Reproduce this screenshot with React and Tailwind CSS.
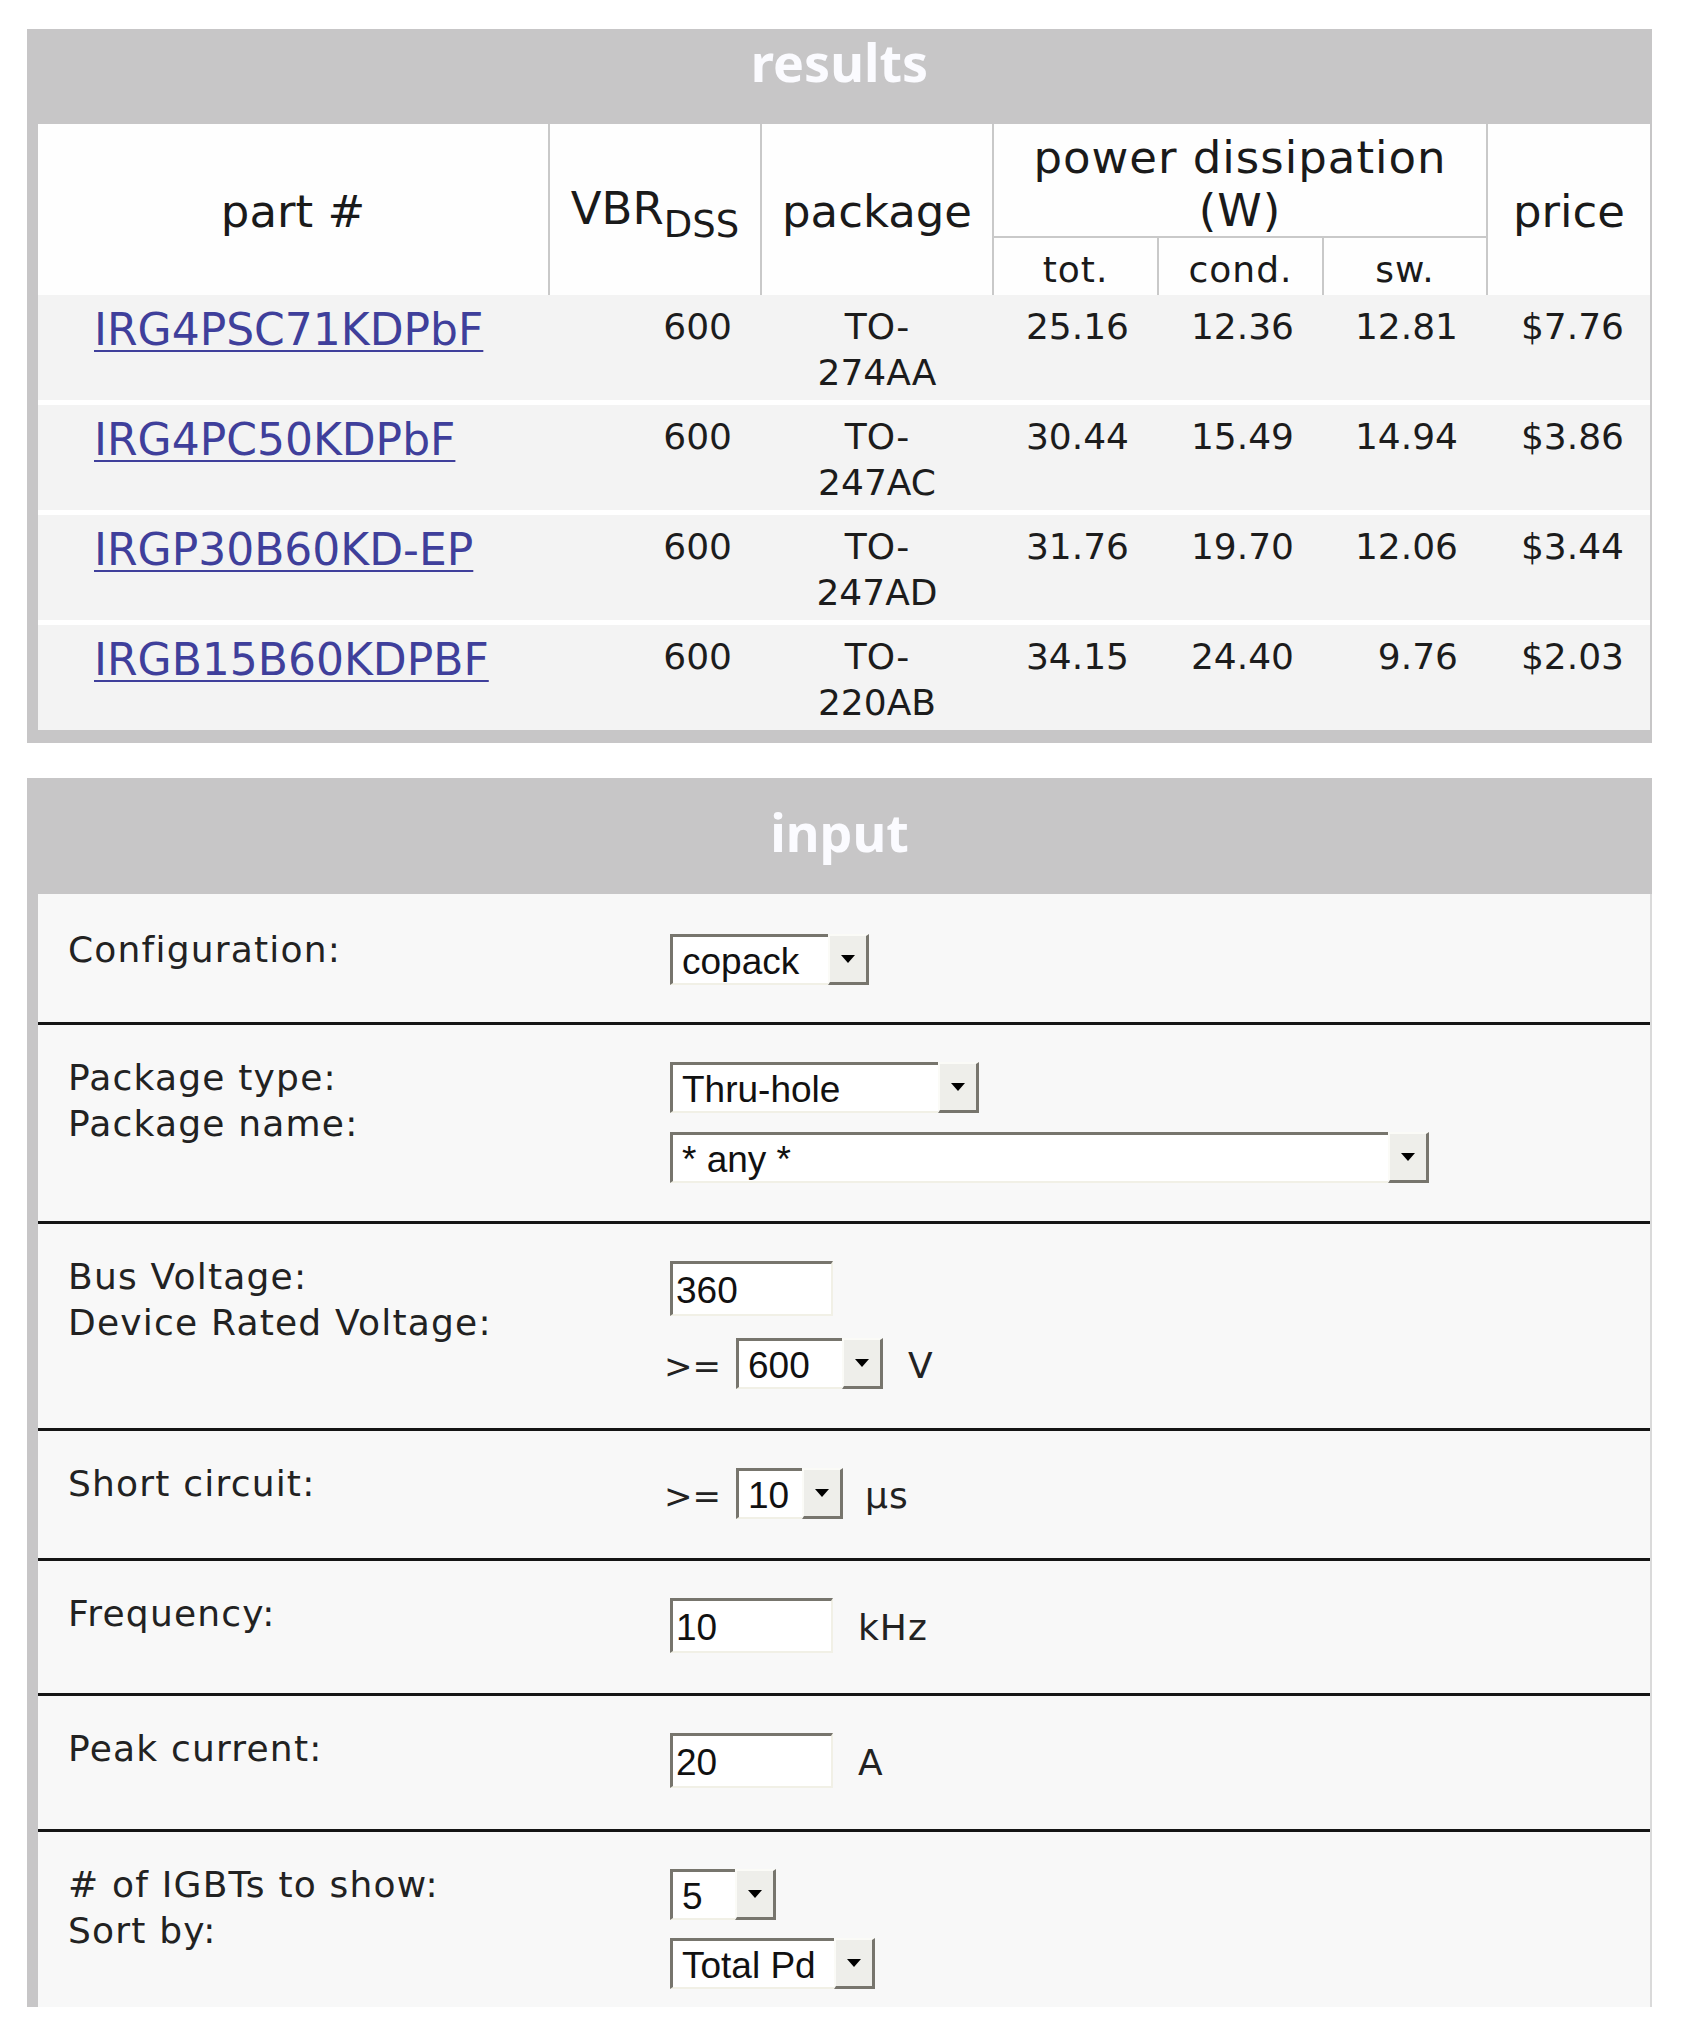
import React from "react";

const rows = [
  { part: "IRG4PSC71KDPbF", v: "600", pkg: ["TO-", "274AA"], tot: "25.16", cond: "12.36", sw: "12.81", price: "$7.76" },
  { part: "IRG4PC50KDPbF", v: "600", pkg: ["TO-", "247AC"], tot: "30.44", cond: "15.49", sw: "14.94", price: "$3.86" },
  { part: "IRGP30B60KD-EP", v: "600", pkg: ["TO-", "247AD"], tot: "31.76", cond: "19.70", sw: "12.06", price: "$3.44" },
  { part: "IRGB15B60KDPBF", v: "600", pkg: ["TO-", "220AB"], tot: "34.15", cond: "24.40", sw: "9.76", price: "$2.03" },
];

function Tri() {
  return (
    <svg width="14" height="8" viewBox="0 0 14 8">
      <polygon points="0,0 14,0 7,8" fill="#000" />
    </svg>
  );
}

function Select({ value, className }) {
  return (
    <div className={`flex h-[51px] shrink-0 ${className}`}>
      <div className="flex-1 bg-white border-t-[3px] border-l-[3px] border-b-2 border-t-[#77756d] border-l-[#77756d] border-b-[#f1f0e6] pl-[9px] pt-[4px] text-[37px] leading-[42px] text-[#111] font-['Liberation_Sans',Arial,sans-serif] whitespace-pre">
        {value}
      </div>
      <div className="w-[41px] flex items-center justify-center bg-[#eeeeea] border-t-2 border-l-2 border-t-[#fbfbf7] border-l-[#fbfbf7] border-r-[3px] border-b-[3px] border-r-[#77756d] border-b-[#77756d]">
        <Tri />
      </div>
    </div>
  );
}

function TextInput({ value }) {
  return (
    <div className="w-[163px] h-[55px] shrink-0 bg-white border-t-[3px] border-l-[3px] border-b-2 border-r-2 border-t-[#77756d] border-l-[#77756d] border-b-[#f1f0e6] border-r-[#f1f0e6] pl-[3px] pt-[6px] text-[37px] leading-[42px] text-[#111] font-['Liberation_Sans',Arial,sans-serif]">
      {value}
    </div>
  );
}

function Unit({ children, className }) {
  return (
    <span className={`leading-[46px] text-[#222] font-['DejaVu_Sans',sans-serif] ${className}`}>
      {children}
    </span>
  );
}

function InputRow({ labels, children, rowClass, stackClass }) {
  return (
    <div className={`flex border-t-[3px] ${rowClass}`}>
      <div className="w-[632px] shrink-0 pl-[30px] pt-[30px] text-[36px] leading-[46px] tracking-[1.2px] text-[#222]">
        {labels.map((l) => (
          <div key={l}>{l}</div>
        ))}
      </div>
      <div className={`flex flex-col pt-[37px] ${stackClass}`}>{children}</div>
    </div>
  );
}

export default function App() {
  return (
    <div className="min-h-[2024px] bg-white pt-[29px] pl-[27px] font-['DejaVu_Sans',sans-serif] text-[#1a1a1a]">
      <div className="w-[1625px]">
        {/* RESULTS */}
        <section className="bg-[#c7c6c7]">
          <div className="h-[95px] pt-[7px] text-center text-[52px] leading-[52px] font-bold text-[#fbfbff] font-['Noto_Sans',sans-serif]">
            results
          </div>
          <div className="pl-[11px] pr-[2px] pb-[13px]">
            <div className="grid grid-cols-[510px_210px_230px_163px_163px_162px_162px] grid-rows-[112px_57px] gap-[2px] bg-[#c9c9c9] text-[45px] leading-[52px]">
              <div className="row-span-2 bg-[#fefefe] flex items-center justify-center pt-[5px]">part #</div>
              <div className="row-span-2 bg-[#fefefe] flex items-center justify-center pb-[2px] whitespace-nowrap">
                <span>
                  VBR<sub className="text-[37px] bottom-[-13px]">DSS</sub>
                </span>
              </div>
              <div className="row-span-2 bg-[#fefefe] flex items-center justify-center pt-[5px]">package</div>
              <div className="col-span-3 bg-[#fefefe] pt-[7px] text-center leading-[53px] tracking-[1px]">
                <div>power dissipation</div>
                <div>(W)</div>
              </div>
              <div className="row-span-2 bg-[#fefefe] flex items-center justify-center pt-[5px]">price</div>
              <div className="bg-[#fefefe] flex items-center justify-center pt-[6px] text-[36px] leading-[46px] tracking-[1px]">tot.</div>
              <div className="bg-[#fefefe] flex items-center justify-center pt-[6px] text-[36px] leading-[46px] tracking-[1px]">cond.</div>
              <div className="bg-[#fefefe] flex items-center justify-center pt-[6px] text-[36px] leading-[46px] tracking-[1px]">sw.</div>
            </div>
            <div className="flex flex-col gap-[5px] bg-white">
              {rows.map((r) => (
                <div
                  key={r.part}
                  className="grid grid-cols-[510px_210px_230px_163px_163px_162px_162px] gap-x-[2px] h-[105px] bg-[#f3f3f3] text-[36px] leading-[46px] text-[#1c1c1c]"
                >
                  <div className="pl-[56px] pt-[12px] text-[44px] leading-[46px]">
                    <a href="#" className="text-[#3f3f9b] underline decoration-2 underline-offset-[5px]">
                      {r.part}
                    </a>
                  </div>
                  <div className="pt-[9px] pr-[28px] text-right">{r.v}</div>
                  <div className="pt-[9px] text-center">
                    <div>{r.pkg[0]}</div>
                    <div>{r.pkg[1]}</div>
                  </div>
                  <div className="pt-[9px] pr-[28px] text-right">{r.tot}</div>
                  <div className="pt-[9px] pr-[28px] text-right">{r.cond}</div>
                  <div className="pt-[9px] pr-[28px] text-right">{r.sw}</div>
                  <div className="pt-[9px] pr-[26px] text-right">{r.price}</div>
                </div>
              ))}
            </div>
          </div>
        </section>

        {/* INPUT */}
        <section className="mt-[35px]">
          <div className="h-[116px] bg-[#c7c6c7] pt-[28px] text-center text-[52px] leading-[52px] font-bold text-[#fbfbff] font-['Noto_Sans',sans-serif]">
            input
          </div>
          <div className="bg-[#f8f8f8] border-l-[11px] border-l-[#c7c6c7] border-r-2 border-r-[#dadada]">
            <InputRow labels={["Configuration:"]} rowClass="border-t-transparent" stackClass="pb-[37px]">
              <Select value="copack" className="w-[199px]" />
            </InputRow>
            <InputRow labels={["Package type:", "Package name:"]} rowClass="border-t-[#151515]" stackClass="pb-[38px] gap-[19px]">
              <Select value="Thru-hole" className="w-[309px]" />
              <Select value="* any *" className="w-[759px]" />
            </InputRow>
            <InputRow labels={["Bus Voltage:", "Device Rated Voltage:"]} rowClass="border-t-[#151515]" stackClass="pb-[39px] gap-[22px]">
              <TextInput value="360" />
              <div className="flex items-baseline">
                <Unit className="text-[34px] -ml-[6px]">&gt;=</Unit>
                <Select value="600" className="w-[147px] ml-[15px]" />
                <Unit className="text-[36px] ml-[25px]">V</Unit>
              </div>
            </InputRow>
            <InputRow labels={["Short circuit:"]} rowClass="border-t-[#151515]" stackClass="pb-[39px]">
              <div className="flex items-baseline">
                <Unit className="text-[34px] -ml-[6px]">&gt;=</Unit>
                <Select value="10" className="w-[107px] ml-[15px]" />
                <Unit className="text-[36px] ml-[22px] tracking-[1px]">µs</Unit>
              </div>
            </InputRow>
            <InputRow labels={["Frequency:"]} rowClass="border-t-[#151515]" stackClass="pb-[40px]">
              <div className="flex items-baseline">
                <TextInput value="10" />
                <Unit className="text-[36px] ml-[25px] tracking-[1px]">kHz</Unit>
              </div>
            </InputRow>
            <InputRow labels={["Peak current:"]} rowClass="border-t-[#151515]" stackClass="pb-[41px]">
              <div className="flex items-baseline">
                <TextInput value="20" />
                <Unit className="text-[36px] ml-[25px]">A</Unit>
              </div>
            </InputRow>
            <InputRow labels={["# of IGBTs to show:", "Sort by:"]} rowClass="border-t-[#151515]" stackClass="pb-[18px] gap-[18px]">
              <Select value="5" className="w-[106px]" />
              <Select value="Total Pd" className="w-[205px]" />
            </InputRow>
          </div>
        </section>
      </div>
    </div>
  );
}
